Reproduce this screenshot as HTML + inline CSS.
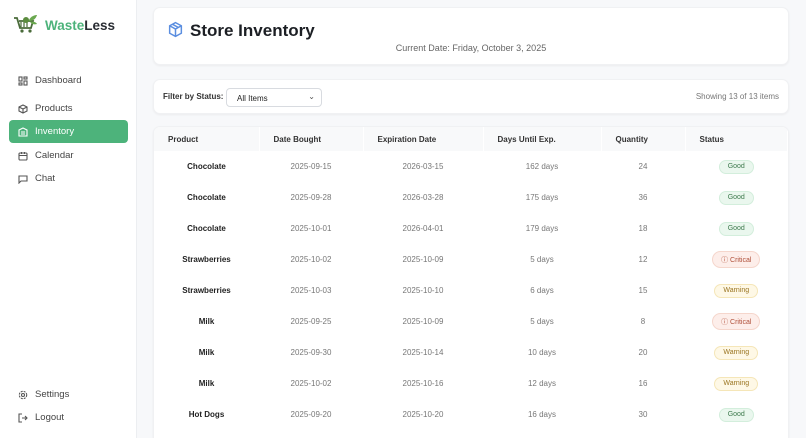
<!DOCTYPE html>
<html><head><meta charset="utf-8"><style>
*{box-sizing:border-box;margin:0;padding:0}
html,body{width:806px;height:438px;overflow:hidden}
body{font-family:"Liberation Sans",sans-serif;background:#f7f8fa;position:relative;color:#222}
.side{position:absolute;left:0;top:0;width:137px;height:438px;background:#fff;border-right:1px solid #eceef1}
.logo{position:absolute;left:13px;top:14px;display:flex;align-items:center}
.logo>span{font-size:13.5px;font-weight:bold;margin-left:6px;color:#2a2d33}
.nav{position:absolute;left:9px;width:119px;height:23px;display:flex;align-items:center;padding-left:9px;font-size:9.5px;color:#444}
.nav svg{display:block;width:10px;height:10px;margin-right:7px;flex:none}
.nav svg *{fill:none;stroke:#555;stroke-width:1.1}
.nav.act{background:#4db37b;color:#fff;border-radius:4px}
.nav.act svg *{stroke:#fff}
.card{position:absolute;left:153px;width:636px;background:#fff;border-radius:7px;box-shadow:0 1px 2px rgba(0,0,0,.05);border:1px solid #f0f1f3}
h1{position:absolute;left:36px;top:13px;font-size:17px;font-weight:bold;color:#1c1f24}
.date{position:absolute;left:0;right:0;top:35px;text-align:center;font-size:9px;color:#666}
table{border-collapse:collapse;width:100%;font-size:8px}
th{height:24px;background:#f8f9fa;text-align:left;padding-left:14px;font-weight:bold;color:#333;border-right:1px solid #fff}
td{height:31px;text-align:center;color:#777}
td:first-child{font-weight:bold;color:#222}
.b{display:inline-block;padding:2.5px 8px;border-radius:9px;font-size:7px;border:1px solid}
.g{background:#eaf7ee;color:#3d7a4d;border-color:#d3eedc}
.c{background:#fdeeea;color:#b0503a;border-color:#f5d6cc}
.w{background:#fef8e6;color:#9a7420;border-color:#f5e6b8}
</style></head><body>
<div class="side">
 <div class="logo">
  <svg width="26" height="22" viewBox="0 0 26 22"><path d="M1 4h3l3 10h11l2-7H6" fill="none" stroke="#4a6b3a" stroke-width="1.8"/><path d="M8 8v5M11 8v5M14 8v5" stroke="#4a6b3a" stroke-width="1.2"/><circle cx="9" cy="17" r="1.6" fill="#4a6b3a"/><circle cx="17" cy="17" r="1.6" fill="#4a6b3a"/><circle cx="13" cy="6" r="3" fill="#5b8c3e"/><path d="M16 6c2-4 6-5 8-5-1 3-3 6-8 6z" fill="#6aa84f"/><path d="M17 8c3-1 6 0 7 2-3 1-5 0-7-2z" fill="#6aa84f"/></svg>
  <span><span style="color:#4db37b">Waste</span>Less</span>
 </div>
 <div class="nav" style="top:69px"><svg viewBox="0 0 10 10"><rect x="1" y="1" width="3" height="4"/><rect x="6" y="1" width="3" height="2"/><rect x="1" y="7" width="3" height="2"/><rect x="6" y="5" width="3" height="4"/></svg>Dashboard</div>
 <div class="nav" style="top:97px"><svg viewBox="0 0 10 10"><path d="M5 1l4 2v4L5 9 1 7V3zM1 3l4 2 4-2M5 5v4"/></svg>Products</div>
 <div class="nav act" style="top:120px"><svg viewBox="0 0 10 10"><path d="M1 9V3l4-2 4 2v6zM3 5h4M3 7h4M3 9h4"/></svg>Inventory</div>
 <div class="nav" style="top:144px"><svg viewBox="0 0 10 10"><rect x="1" y="2" width="8" height="7" rx="1"/><path d="M1 4.5h8M3.5 1v2M6.5 1v2"/></svg>Calendar</div>
 <div class="nav" style="top:167px"><svg viewBox="0 0 10 10"><path d="M1 2h8v5H3L1 9z"/></svg>Chat</div>
 <div class="nav" style="top:383px"><svg viewBox="0 0 10 10"><circle cx="5" cy="5" r="1.5"/><circle cx="5" cy="5" r="3.7" stroke-dasharray="2 1"/></svg>Settings</div>
 <div class="nav" style="top:406px"><svg viewBox="0 0 10 10"><path d="M4 1H1v8h3M4 5h5M7 3l2 2-2 2"/></svg>Logout</div>
</div>
<div class="card" style="top:7px;height:58px">
 <svg style="position:absolute;left:13px;top:13px" width="17" height="17" viewBox="0 0 16 16" fill="none" stroke="#5b8ee0" stroke-width="1.4"><path d="M8 1.5l5.5 3v7L8 14.5 2.5 11.5v-7zM2.5 4.5 8 7.5l5.5-3M8 7.5v7M5 3l5.5 3"/></svg>
 <h1>Store Inventory</h1>
 <div class="date">Current Date: Friday, October 3, 2025</div>
</div>
<div class="card" style="top:79px;height:35px">
 <div style="position:absolute;left:9px;top:12px;font-size:8px;font-weight:bold;color:#333">Filter by Status:</div>
 <div style="position:absolute;left:72px;top:8px;width:96px;height:19px;border:1px solid #d8dbe0;border-radius:4px;font-size:8px;padding:5px 0 0 10px;color:#222">All Items<span style="position:absolute;right:6px;top:3px;font-size:8px;color:#555">&#8964;</span></div>
 <div style="position:absolute;right:9px;top:12px;font-size:8px;color:#777">Showing 13 of 13 items</div>
</div>
<div class="card" style="top:126px;height:312px;overflow:hidden;border-bottom:none;border-radius:7px 7px 0 0">
<table>
<tr><th style="width:105px">Product</th><th style="width:104px">Date Bought</th><th style="width:120px">Expiration Date</th><th style="width:118px">Days Until Exp.</th><th style="width:84px">Quantity</th><th>Status</th></tr>
<tr><td>Chocolate</td><td>2025-09-15</td><td>2026-03-15</td><td>162 days</td><td>24</td><td><span class="b g">Good</span></td></tr>
<tr><td>Chocolate</td><td>2025-09-28</td><td>2026-03-28</td><td>175 days</td><td>36</td><td><span class="b g">Good</span></td></tr>
<tr><td>Chocolate</td><td>2025-10-01</td><td>2026-04-01</td><td>179 days</td><td>18</td><td><span class="b g">Good</span></td></tr>
<tr><td>Strawberries</td><td>2025-10-02</td><td>2025-10-09</td><td>5 days</td><td>12</td><td><span class="b c">&#9432; Critical</span></td></tr>
<tr><td>Strawberries</td><td>2025-10-03</td><td>2025-10-10</td><td>6 days</td><td>15</td><td><span class="b w">Warning</span></td></tr>
<tr><td>Milk</td><td>2025-09-25</td><td>2025-10-09</td><td>5 days</td><td>8</td><td><span class="b c">&#9432; Critical</span></td></tr>
<tr><td>Milk</td><td>2025-09-30</td><td>2025-10-14</td><td>10 days</td><td>20</td><td><span class="b w">Warning</span></td></tr>
<tr><td>Milk</td><td>2025-10-02</td><td>2025-10-16</td><td>12 days</td><td>16</td><td><span class="b w">Warning</span></td></tr>
<tr><td>Hot Dogs</td><td>2025-09-20</td><td>2025-10-20</td><td>16 days</td><td>30</td><td><span class="b g">Good</span></td></tr>
<tr><td>Hot Dogs</td><td>2025-09-25</td><td>2025-10-25</td><td>21 days</td><td>28</td><td><span class="b g">Good</span></td></tr>
</table>
</div>
</body></html>
